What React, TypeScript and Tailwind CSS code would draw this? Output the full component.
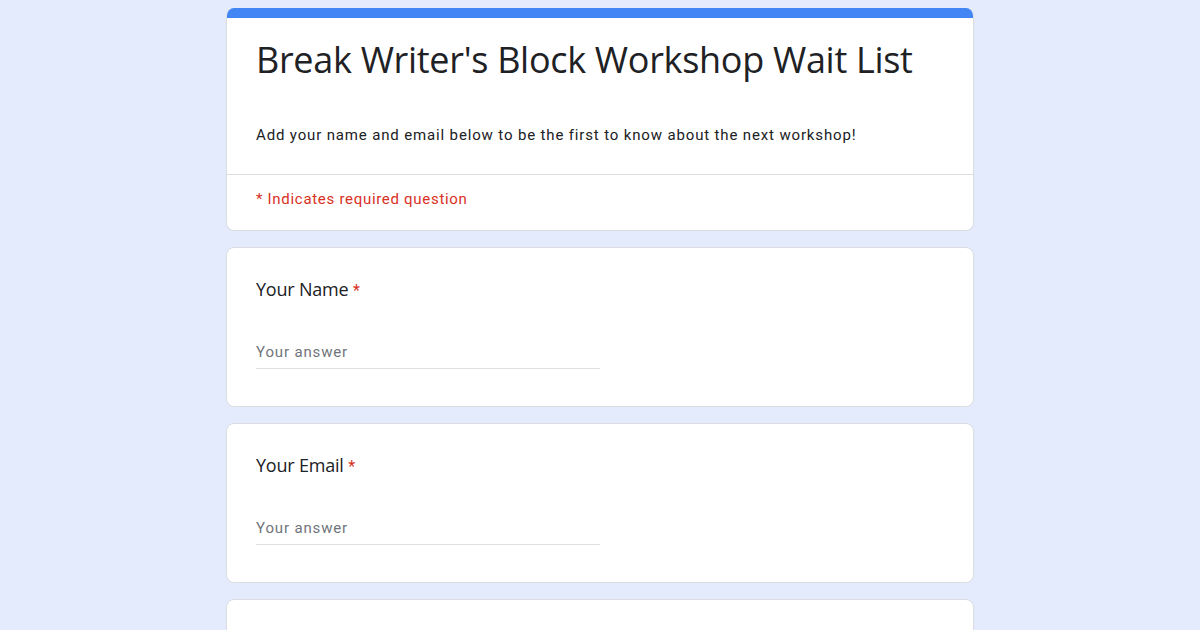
import React from "react";

function Question({ label }: { label: string }) {
  return (
    <div className="bg-white border border-[#dadce0] rounded-lg px-[29px] pt-[29px] pb-[37px]">
      <div className="h-6 overflow-visible text-[18px] leading-6 text-[#202124] font-['Open_Sans',sans-serif] tracking-[-0.2px]">
        {label}{" "}
        <span className="text-[#d93025] font-['Roboto',sans-serif] text-[16px] leading-none">*</span>
      </div>
      <div className="mt-[39px] w-1/2 border-b border-[#e0e0e0] pb-[4px]">
        <div className="text-[15px] leading-6 text-[#70757a] tracking-[0.85px]">Your answer</div>
      </div>
    </div>
  );
}

export default function App() {
  return (
    <div className="h-screen overflow-hidden w-full bg-[#e3ebfc] font-['Roboto',sans-serif]">
      <div className="mx-auto w-[748px] pt-2 flex flex-col gap-[16px]">
        <div className="bg-white border border-[#dadce0] border-t-0 rounded-lg overflow-hidden">
          <div className="h-[10px] bg-[#4285f4]" />
          <div className="px-[29px] pt-[18px] pb-[29px] border-b border-[#dadce0]">
            <h1 className="text-[36px] leading-[48px] text-[#202124] font-['Open_Sans',sans-serif] tracking-[-0.3px]">
              Break Writer's Block Workshop Wait List
            </h1>
            <p className="mt-[41px] text-[15px] leading-5 text-[#202124] tracking-[0.85px]">
              Add your name and email below to be the first to know about the next workshop!
            </p>
          </div>
          <div className="px-[29px] pt-[14px] pb-[21px] text-[15px] leading-5 text-[#d93025] tracking-[0.7px]">
            * Indicates required question
          </div>
        </div>
        <Question label="Your Name" />
        <Question label="Your Email" />
        <div className="bg-white border border-[#dadce0] rounded-lg h-[160px]" />
      </div>
    </div>
  );
}
